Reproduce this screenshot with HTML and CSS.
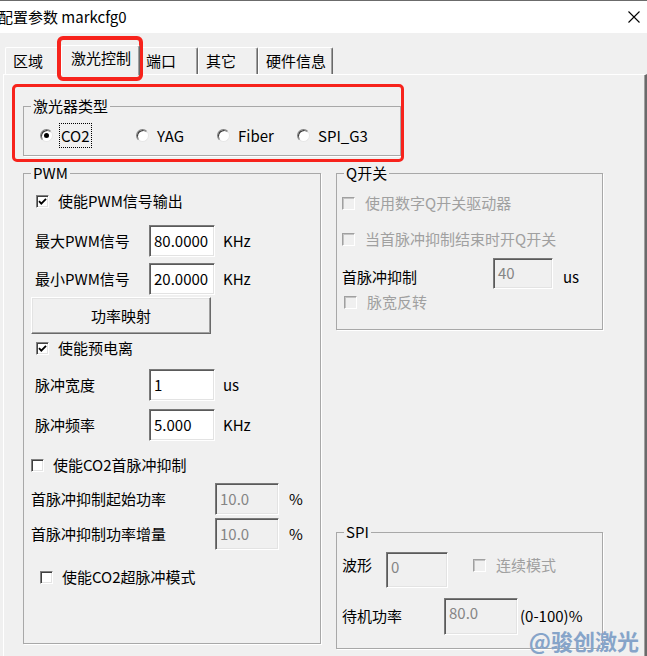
FILE: index.html
```html
<!DOCTYPE html>
<html>
<head>
<meta charset="utf-8">
<title>配置参数 markcfg0</title>
<link rel="stylesheet" href="styles.css">
</head>
<body>
<div class="window">
  <div class="titlebar">
    <span class="title">配置参数 markcfg0</span>
    <svg class="close" width="12" height="12" viewBox="0 0 12 12"><path d="M0.5 0.5 L11.5 11.5 M11.5 0.5 L0.5 11.5" stroke="#000" stroke-width="1.1" fill="none"/></svg>
  </div>
  <div class="tabs">
    <div class="tab tab-first">区域</div>
    <div class="tab tab-active">激光控制</div>
    <div class="tab">端口</div>
    <div class="tab">其它</div>
    <div class="tab">硬件信息</div>
  </div>
  <div class="panel">
    <fieldset class="group laser">
      <legend>激光器类型</legend>
      <div class="radios">
        <div class="radio r-co2"><span class="rb on"></span><span class="lbl focus">CO2</span></div>
        <div class="radio r-yag"><span class="rb"></span><span class="lbl">YAG</span></div>
        <div class="radio r-fiber"><span class="rb"></span><span class="lbl">Fiber</span></div>
        <div class="radio"><span class="rb"></span><span class="lbl">SPI_G3</span></div>
      </div>
    </fieldset>
    <div class="columns">
      <fieldset class="group pwm">
        <legend>PWM</legend>
        <div class="body">
          <div class="chk-row pa1"><span class="cb"><svg width="11" height="11" viewBox="0 0 11 11"><path d="M2 5.2 L4.3 7.6 L9 2.8" stroke="#000" stroke-width="1.8" fill="none"/></svg></span>使能PWM信号输出</div>
          <div class="field pb1"><span class="flabel w114">最大PWM信号</span><span class="edit e66">80.0000</span><span class="unit">KHz</span></div>
          <div class="field pb2"><span class="flabel w114">最小PWM信号</span><span class="edit e66">20.0000</span><span class="unit">KHz</span></div>
          <div class="button">功率映射</div>
          <div class="chk-row pa2"><span class="cb"><svg width="11" height="11" viewBox="0 0 11 11"><path d="M2 5.2 L4.3 7.6 L9 2.8" stroke="#000" stroke-width="1.8" fill="none"/></svg></span>使能预电离</div>
          <div class="field pb3"><span class="flabel w114">脉冲宽度</span><span class="edit e66">1</span><span class="unit">us</span></div>
          <div class="field pb4"><span class="flabel w114">脉冲频率</span><span class="edit e66">5.000</span><span class="unit">KHz</span></div>
          <div class="chk-row pa3"><span class="cb"></span>使能CO2首脉冲抑制</div>
          <div class="field pb5"><span class="flabel w184">首脉冲抑制起始功率</span><span class="edit e64 disabled">10.0</span><span class="unit u10">%</span></div>
          <div class="field pb6"><span class="flabel w184">首脉冲抑制功率增量</span><span class="edit e64 disabled">10.0</span><span class="unit u10">%</span></div>
          <div class="chk-row pa4"><span class="cb"></span>使能CO2超脉冲模式</div>
        </div>
      </fieldset>
      <div class="right">
        <fieldset class="group q">
          <legend>Q开关</legend>
          <div class="body">
            <div class="chk-row qa1 off"><span class="cb dis"></span>使用数字Q开关驱动器</div>
            <div class="chk-row qa2 off"><span class="cb dis"></span>当首脉冲抑制结束时开Q开关</div>
            <div class="field qb1"><span class="flabel w151 low">首脉冲抑制</span><span class="edit e60 h31 disabled top">40</span><span class="unit u10 low">us</span></div>
            <div class="chk-row qa3 off"><span class="cb dis"></span>脉宽反转</div>
          </div>
        </fieldset>
        <fieldset class="group spi">
          <legend>SPI</legend>
          <div class="body">
            <div class="field top-row sr1">
              <span class="flabel w44 m4">波形</span>
              <span class="edit e62 h36 disabled top">0</span>
              <span class="chk-row inline off"><span class="cb dis"></span>连续模式</span>
            </div>
            <div class="field top-row sr2">
              <span class="flabel w102 m9">待机功率</span>
              <span class="edit e74 h37 disabled top">80.0</span>
              <span class="unit u2 m9">(0-100)%</span>
            </div>
          </div>
        </fieldset>
      </div>
    </div>
  </div>
  <div class="mark mark-tab"></div>
  <div class="mark mark-laser"></div>
  <div class="watermark">@骏创激光</div>
</div>
</body>
</html>
```
FILE: styles.css
```css
* { box-sizing: border-box; }
html, body { margin: 0; padding: 0; background: #f0f0f0; }
.window {
  position: relative;
  width: 647px;
  height: 656px;
  overflow: hidden;
  background: #f0f0f0;
  display: flex;
  flex-direction: column;
  font-family: "Noto Sans CJK SC", "Microsoft YaHei", sans-serif;
  font-size: 15px;
  color: #000;
}
.titlebar {
  height: 33px;
  flex: none;
  border-top: 1px solid #6b6b6b;
  background: #fff;
  display: flex;
  align-items: center;
  justify-content: space-between;
  padding-right: 7px;
}
.title { margin-left: -2px; line-height: 20px; font-size: 15px; white-space: nowrap; }
.close { display: block; }

.tabs {
  height: 41px;
  flex: none;
  display: flex;
  align-items: flex-end;
  padding-left: 5px;
}
.tab {
  height: 27px;
  min-width: 60px;
  padding: 4px 6px 0 7px;
  line-height: 18px;
  border-top: 1px solid #fff;
  border-left: 1px solid #fff;
  border-right: 1px solid #696969;
  box-shadow: inset -1px 0 0 #a0a0a0;
  border-radius: 2px 2px 0 0;
  background: #f0f0f0;
  white-space: nowrap;
}
.tab-first { min-width: 58px; }
.tab-active {
  height: 30px;
  margin: 0 -2px -1px -2px;
  padding: 3px 8px 0 9px;
  position: relative;
  z-index: 1;
}

.panel {
  flex: 1;
  margin-left: 3px;
  border-top: 1px solid #fff;
  border-left: 1px solid #fff;
  border-right: 2px solid #6a6a6a;
  box-shadow: inset -1px 0 0 #a0a0a0;
}

.group {
  margin: 0;
  padding: 0;
  min-width: 0;
  border: 1px solid #a8a8a8;
  box-shadow: 1px 1px 0 #fff;
}
.group legend {
  margin-left: 7px;
  padding: 0 2px;
  line-height: 18px;
  font-size: 15px;
}

.laser { margin: 22px 0 0 19px; width: 378px; }
.radios {
  display: flex;
  align-items: center;
  height: 40px;
  padding: 7px 0 7px 16px;
}
.radio { display: flex; align-items: center; height: 26px; }
.r-co2 { width: 96px; }
.r-yag { width: 81px; }
.r-fiber { width: 80px; }
.rb {
  width: 13px;
  height: 13px;
  border-radius: 50%;
  background: #fff;
  border: 1px solid;
  border-color: #808080 #e6e6e6 #e6e6e6 #808080;
  box-shadow: inset 1px 1px 0 #3a3a3a;
  margin-right: 6px;
  display: flex;
  align-items: center;
  justify-content: center;
  flex: none;
}
.rb.on::after {
  content: "";
  width: 5px;
  height: 5px;
  border-radius: 50%;
  background: #000;
}
.lbl {
  border: 1px solid transparent;
  padding: 0 1px;
  line-height: 23px;
}
.lbl.focus { border: 1px dotted #000; }

.columns {
  display: flex;
  gap: 15px;
  margin: 8px 0 0 19px;
}
.pwm { width: 298px; height: 480px; }
.right { display: flex; flex-direction: column; width: 267px; }
.q { height: 166px; }
.spi { height: 126px; margin-top: 193px; }

.body { display: flex; flex-direction: column; }

.chk-row {
  display: flex;
  align-items: center;
  height: 18px;
  line-height: 18px;
  white-space: nowrap;
}
.chk-row.off { color: #a0a0a0; }
.cb {
  width: 13px;
  height: 13px;
  flex: none;
  background: #fff;
  border: 1px solid;
  border-color: #808080 #fff #fff #808080;
  box-shadow: inset 1px 1px 0 #404040, inset -1px -1px 0 #e3e3e3;
  margin-right: 9px;
  display: flex;
  align-items: center;
  justify-content: center;
}
.cb svg { display: block; }
.cb.dis {
  background: #f0f0f0;
  border-color: #a0a0a0 #fff #fff #a0a0a0;
  box-shadow: inset 1px 1px 0 #c4c4c4;
  margin-right: 10px;
}

.pa1 { margin-top: 10px; padding-left: 12px; }
.pa2 { margin-top: 5px; padding-left: 12px; }
.pa3 { margin-top: 15px; padding-left: 7px; }
.pa4 { margin-top: 18px; padding-left: 16px; }

.field {
  display: flex;
  align-items: center;
  white-space: nowrap;
}
.field.top-row { align-items: flex-start; padding-left: 5px; }
.pb1 { margin-top: 15px; padding-left: 11px; }
.pb2 { margin-top: 6px; padding-left: 11px; }
.pb3 { margin-top: 12px; padding-left: 11px; }
.pb4 { margin-top: 8px; padding-left: 11px; }
.pb5 { margin-top: 9px; padding-left: 7px; }
.pb6 { margin-top: 3px; padding-left: 7px; }

.flabel { line-height: 18px; flex: none; }
.w114 { width: 114px; }
.w184 { width: 184px; }
.w151 { width: 151px; }
.w44 { width: 44px; }
.w102 { width: 102px; }
.m4 { margin-top: 4px; }
.m9 { margin-top: 9px; }
.low { padding-top: 7px; }

.edit {
  flex: none;
  height: 32px;
  display: flex;
  align-items: center;
  padding-left: 4px;
  background: #fff;
  border: 1px solid;
  border-color: #7a7a7a #fff #fff #7a7a7a;
  box-shadow: inset 1px 1px 0 #5a5a5a, inset -1px -1px 0 #e3e3e3;
  line-height: 18px;
}
.edit.disabled { background: #f0f0f0; color: #858585; }
.edit.top { align-items: flex-start; padding-top: 5px; }
.e66 { width: 66px; }
.e64 { width: 64px; }
.e60 { width: 60px; }
.e62 { width: 62px; }
.e74 { width: 74px; }
.h31 { height: 31px; }
.h36 { height: 36px; }
.h37 { height: 37px; }

.unit { margin-left: 8px; line-height: 18px; }
.u10 { margin-left: 10px; }
.u2 { margin-left: 2px; }

.button {
  margin: 2px 0 0 7px;
  width: 180px;
  height: 37px;
  display: flex;
  align-items: center;
  justify-content: center;
  background: #f0f0f0;
  border: 1px solid;
  border-color: #fff #696969 #696969 #fff;
  box-shadow: inset -1px -1px 0 #a0a0a0, inset 1px 1px 0 #e3e3e3;
}

.qa1 { margin-top: 12px; padding-left: 5px; }
.qa2 { margin-top: 18px; padding-left: 5px; }
.qb1 { margin-top: 10px; padding-left: 5px; }
.qa3 { margin-top: 4px; padding-left: 7px; }

.sr1 { margin-top: 11px; }
.sr2 { margin-top: 10px; }
.chk-row.inline { margin-left: 25px; margin-top: 4px; }

.mark {
  position: absolute;
  border: 4px solid #f7231c;
  border-radius: 6px;
  pointer-events: none;
}
.mark-tab { left: 57px; top: 36px; width: 86px; height: 45px; }
.mark-laser { left: 12px; top: 84px; width: 392px; height: 78px; border-width: 3.5px; border-radius: 5px; }

.watermark {
  position: absolute;
  right: 8px;
  bottom: 3px;
  font-size: 22px;
  font-weight: bold;
  line-height: 26px;
  color: #86a4c9;
  white-space: nowrap;
}
```
